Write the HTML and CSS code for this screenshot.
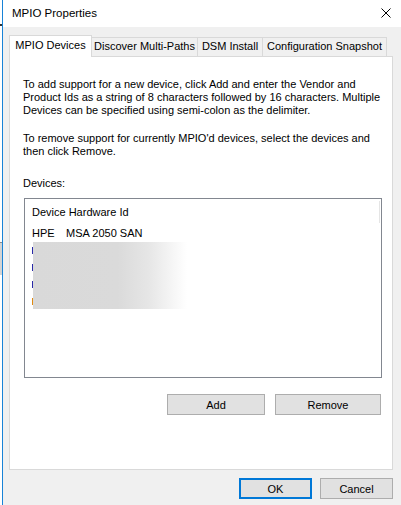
FILE: index.html
```html
<!DOCTYPE html>
<html lang="en">
<head>
    <meta charset="UTF-8">
    <title>MPIO Properties</title>
    <link rel="stylesheet" href="styles.css">
</head>
<body>
    <div class="desk"><span class="tick"></span><span class="shade"></span></div>
    <div class="window">
        <div class="titlebar">
            <span class="title">MPIO Properties</span>
            <svg class="close" width="10" height="10" viewBox="0 0 10 10">
                <path d="M0.5 0.5 L9.5 9.5 M9.5 0.5 L0.5 9.5" stroke="#000" stroke-width="1" fill="none"/>
            </svg>
        </div>

        <div class="dialog-body">
            <div class="tabs">
                <div class="tab active">MPIO Devices</div>
                <div class="tab tab-discover">Discover Multi-Paths</div>
                <div class="tab tab-dsm">DSM Install</div>
                <div class="tab tab-config">Configuration Snapshot</div>
            </div>

            <div class="panel">
                <p class="info">To add support for a new device, click Add and enter the Vendor and Product Ids as a string of 8 characters followed by 16 characters. Multiple Devices can be specified using semi-colon as the delimiter.</p>
                <p class="info second">To remove support for currently MPIO'd devices, select the devices and then click Remove.</p>
                <div class="label">Devices:</div>

                <div class="list">
                    <div class="list-header">Device Hardware Id<span class="col-sep"></span></div>
                    <div class="row"><span class="vendor">HPE</span>MSA 2050 SAN</div>
                    <div class="row"><span class="mark"></span></div>
                    <div class="row"><span class="mark"></span></div>
                    <div class="row"><span class="mark"></span></div>
                    <div class="row"><span class="mark orange"></span></div>
                    <div class="blur"></div>
                </div>

                <div class="actions">
                    <button type="button" class="button btn-add">Add</button>
                    <button type="button" class="button btn-remove">Remove</button>
                </div>
            </div>

            <div class="footer">
                <button type="button" class="button btn-ok">OK</button>
                <button type="button" class="button btn-cancel">Cancel</button>
            </div>
        </div>
    </div>
</body>
</html>
```

FILE: styles.css
```css
body {
    font-family: "Liberation Sans", Arial, sans-serif;
    font-size: 11px;
    color: #000;
    margin: 0;
    display: flex;
    height: 505px;
    overflow: hidden;
    background-color: #ffffff;
}
.desk {
    width: 2px;
    position: relative;
}
.desk .tick {
    position: absolute;
    left: 0;
    top: 24px;
    width: 2px;
    height: 2px;
    background-color: #333;
}
.desk .shade {
    position: absolute;
    left: 0;
    top: 242px;
    width: 2px;
    height: 32px;
    background-color: #d4d4d4;
    border-top: 1px solid #8a8a8a;
}
.window {
    flex: 1;
    border-left: 1px solid #1883d7;
    display: flex;
    flex-direction: column;
    background-color: #f0f0f0;
}
.titlebar {
    height: 26px;
    background-color: #ffffff;
    display: flex;
    align-items: center;
    justify-content: space-between;
    padding: 0 10px 1px 9px;
}
.title {
    font-size: 11.5px;
}
.dialog-body {
    padding: 8px 8px 0 6px;
}
.tabs {
    display: flex;
    align-items: flex-end;
    height: 21px;
}
.tab {
    box-sizing: border-box;
    height: 19px;
    line-height: 17px;
    text-align: center;
    white-space: nowrap;
    border-top: 1px solid #d9d9d9;
    border-right: 1px solid #d9d9d9;
    background-color: #f0f0f0;
}
.tab.active {
    width: 83px;
    height: 22px;
    line-height: 19px;
    margin-bottom: -1px;
    background-color: #ffffff;
    border-left: 1px solid #d9d9d9;
    position: relative;
    z-index: 1;
}
.tab-discover {
    width: 106px;
}
.tab-dsm {
    width: 65px;
}
.tab-config {
    width: 124px;
}
.panel {
    box-sizing: border-box;
    height: 414px;
    background-color: #ffffff;
    border: 1px solid #d9d9d9;
    padding: 21px 10px 0 13px;
}
.info {
    margin: 0;
    line-height: 13px;
}
.info.second {
    margin-top: 15px;
}
.label {
    margin-top: 19px;
    line-height: 13px;
}
.list {
    position: relative;
    box-sizing: border-box;
    height: 180px;
    margin: 8px 0 0 1px;
    border: 1px solid #828790;
    padding-left: 7px;
}
.list-header {
    height: 26px;
    line-height: 26px;
    position: relative;
}
.col-sep {
    position: absolute;
    right: 1px;
    top: 2px;
    width: 1px;
    height: 22px;
    background-color: #e5e5e5;
}
.row {
    height: 17px;
    line-height: 17px;
    display: flex;
    align-items: center;
}
.vendor {
    display: inline-block;
    width: 34px;
}
.mark {
    width: 1px;
    height: 7px;
    background-color: #2a2aa8;
}
.mark.orange {
    background-color: #e08a10;
}
.blur {
    position: absolute;
    left: 8px;
    top: 43px;
    width: 154px;
    height: 67px;
    background: linear-gradient(to right, #d9d9d9 0%, #dadada 55%, #e6e6e6 75%, #ffffff 100%);
}
.actions {
    display: flex;
    justify-content: flex-end;
    gap: 10px;
    margin: 16px 1px 0 0;
}
.button {
    box-sizing: border-box;
    height: 21px;
    padding: 0;
    font-family: "Liberation Sans", Arial, sans-serif;
    font-size: 11px;
    color: #000;
    background-color: #e1e1e1;
    border: 1px solid #adadad;
    cursor: pointer;
}
.btn-add {
    width: 98px;
}
.btn-remove {
    width: 106px;
}
.footer {
    display: flex;
    justify-content: flex-end;
    gap: 8px;
    padding: 8px 0 0 0;
}
.btn-ok,
.btn-cancel {
    width: 73px;
}
.btn-ok {
    border: 2px solid #0078d7;
}
```
